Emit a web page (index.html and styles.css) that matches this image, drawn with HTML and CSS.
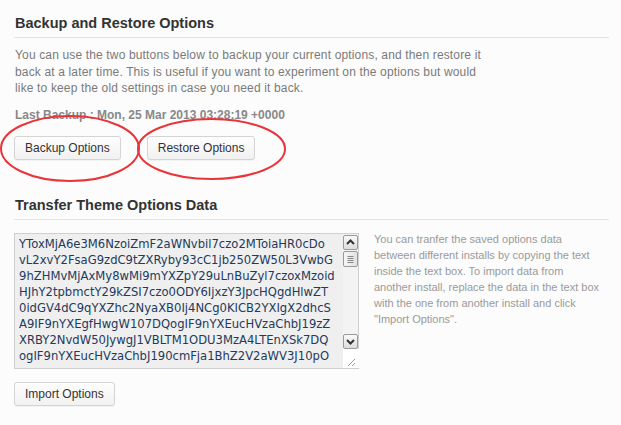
FILE: index.html
```html
<!DOCTYPE html>
<html>
<head>
<meta charset="utf-8">
<link rel="stylesheet" href="styles.css">
</head>
<body>
<div class="page">
  <h2 class="section-title">Backup and Restore Options</h2>
  <p class="desc">You can use the two buttons below to backup your current options, and then restore it back at a later time. This is useful if you want to experiment on the options but would like to keep the old settings in case you need it back.</p>
  <p class="last-backup">Last Backup : Mon, 25 Mar 2013 03:28:19 +0000</p>
  <div class="btn-row">
    <button class="btn">Backup Options</button>
    <button class="btn">Restore Options</button>
  </div>

  <h2 class="section-title second">Transfer Theme Options Data</h2>
  <div class="transfer">
    <div class="textbox">
      <div class="textbox-text">YToxMjA6e3M6NzoiZmF2aWNvbil7czo2MToiaHR0cDo
vL2xvY2FsaG9zdC9tZXRyby93cC1jb250ZW50L3VwbG
9hZHMvMjAxMy8wMi9mYXZpY29uLnBuZyl7czoxMzoid
HJhY2tpbmctY29kZSI7czo0ODY6IjxzY3JpcHQgdHlwZT
0idGV4dC9qYXZhc2NyaXB0Ij4NCg0KICB2YXIgX2dhcS
A9IF9nYXEgfHwgW107DQogIF9nYXEucHVzaChbJ19zZ
XRBY2NvdW50JywgJ1VBLTM1ODU3MzA4LTEnXSk7DQ
ogIF9nYXEucHVzaChbJ190cmFja1BhZ2V2aWV3J10pO</div>
      <div class="scrollbar">
        <div class="sb-btn">
          <svg width="13" height="13" viewBox="0 0 13 13"><polyline points="3,8 6.5,4.5 10,8" fill="none" stroke="#333" stroke-width="2"/></svg>
        </div>
        <div class="sb-thumb">
          <svg width="13" height="14" viewBox="0 0 13 14"><path d="M3.5 4.5h6M3.5 6.5h6M3.5 8.5h6M3.5 10.5h6" stroke="#888" stroke-width="1"/></svg>
        </div>
        <div class="sb-track"></div>
        <div class="sb-btn">
          <svg width="13" height="13" viewBox="0 0 13 13"><polyline points="3,5 6.5,8.5 10,5" fill="none" stroke="#333" stroke-width="2"/></svg>
        </div>
        <div class="sb-corner">
          <svg width="14" height="19" viewBox="0 0 14 19"><path d="M5 17L12 10M9 17L12 14" stroke="#999" stroke-width="1"/></svg>
        </div>
      </div>
    </div>
    <p class="transfer-help">You can tranfer the saved options data between different installs by copying the text inside the text box. To import data from another install, replace the data in the text box with the one from another install and click "Import Options".</p>
  </div>
  <div class="btn-row import-row">
    <button class="btn">Import Options</button>
  </div>
</div>
<svg class="annotations" width="621" height="425" viewBox="0 0 621 425">
  <ellipse cx="70" cy="148.5" rx="69" ry="32.5" fill="none" stroke="#e8343a" stroke-width="2"/>
  <ellipse cx="211.5" cy="149" rx="73.5" ry="30" fill="none" stroke="#e8343a" stroke-width="2"/>
</svg>
</body>
</html>
```

FILE: styles.css
```css
html, body {
  margin: 0;
  padding: 0;
  background: #fcfcfc;
}
body {
  font-family: "Liberation Sans", Arial, sans-serif;
  width: 621px;
  height: 425px;
  overflow: hidden;
  position: relative;
}
.page {
  padding: 14px 12px 0 14px;
}
.section-title {
  margin: 0;
  padding: 0 0 5px 1px;
  font-size: 14.5px;
  line-height: 18px;
  font-weight: bold;
  color: #333;
  border-bottom: 1px solid #e3e3e3;
}
.section-title.second {
  margin-top: 36px;
}
.desc {
  margin: 9px 0 0 1px;
  max-width: 467px;
  font-size: 12px;
  letter-spacing: 0.15px;
  line-height: 16.5px;
  color: #7a7a7a;
}
.last-backup {
  margin: 10px 0 0 1px;
  font-size: 12px;
  line-height: 16px;
  font-weight: bold;
  color: #888;
}
.btn-row {
  display: flex;
  gap: 26px;
  margin-top: 13px;
}
.btn {
  font-family: "Liberation Sans", Arial, sans-serif;
  font-size: 12px;
  color: #333;
  height: 24px;
  padding: 0 10px;
  border: 1px solid #d4d4d4;
  border-radius: 3px;
  background: linear-gradient(#fefefe, #f1f1f1);
  box-shadow: 0 1px 0 rgba(0,0,0,0.04);
}
.transfer {
  display: flex;
  gap: 15px;
  margin-top: 13px;
}
.textbox {
  display: flex;
  width: 343px;
  height: 134px;
  border: 1px solid #cfcfcf;
  background: #efefef;
  flex: none;
}
.textbox-text {
  flex: 1;
  padding: 2px 0 0 4px;
  font-family: "DejaVu Sans", Verdana, sans-serif;
  font-size: 11.6px;
  line-height: 16px;
  color: #233a5c;
  white-space: pre;
  overflow: hidden;
}
.scrollbar {
  width: 15px;
  display: flex;
  flex-direction: column;
  padding-top: 1px;
  background: #f3f3f3;
}
.sb-btn {
  width: 13px;
  height: 13px;
  border: 1px solid #9a9a9a;
  border-radius: 2px;
  background: linear-gradient(#fafafa, #dcdcdc);
}
.sb-btn svg, .sb-thumb svg {
  display: block;
}
.sb-thumb {
  width: 13px;
  height: 14px;
  margin-top: 1px;
  border: 1px solid #9a9a9a;
  border-radius: 2px;
  background: linear-gradient(90deg, #f6f6f6, #e2e2e2);
}
.sb-track {
  flex: 1;
}
.sb-corner {
  height: 19px;
  background: #fff;
  margin-right: -1px;
}
.sb-corner svg {
  display: block;
}
.transfer-help {
  margin: -2px 0 0 0;
  width: 228px;
  font-size: 11px;
  line-height: 16px;
  color: #9a9a9a;
}
.import-row {
  margin-top: 13px;
}
.annotations {
  position: absolute;
  left: 0;
  top: 0;
  pointer-events: none;
}
```
